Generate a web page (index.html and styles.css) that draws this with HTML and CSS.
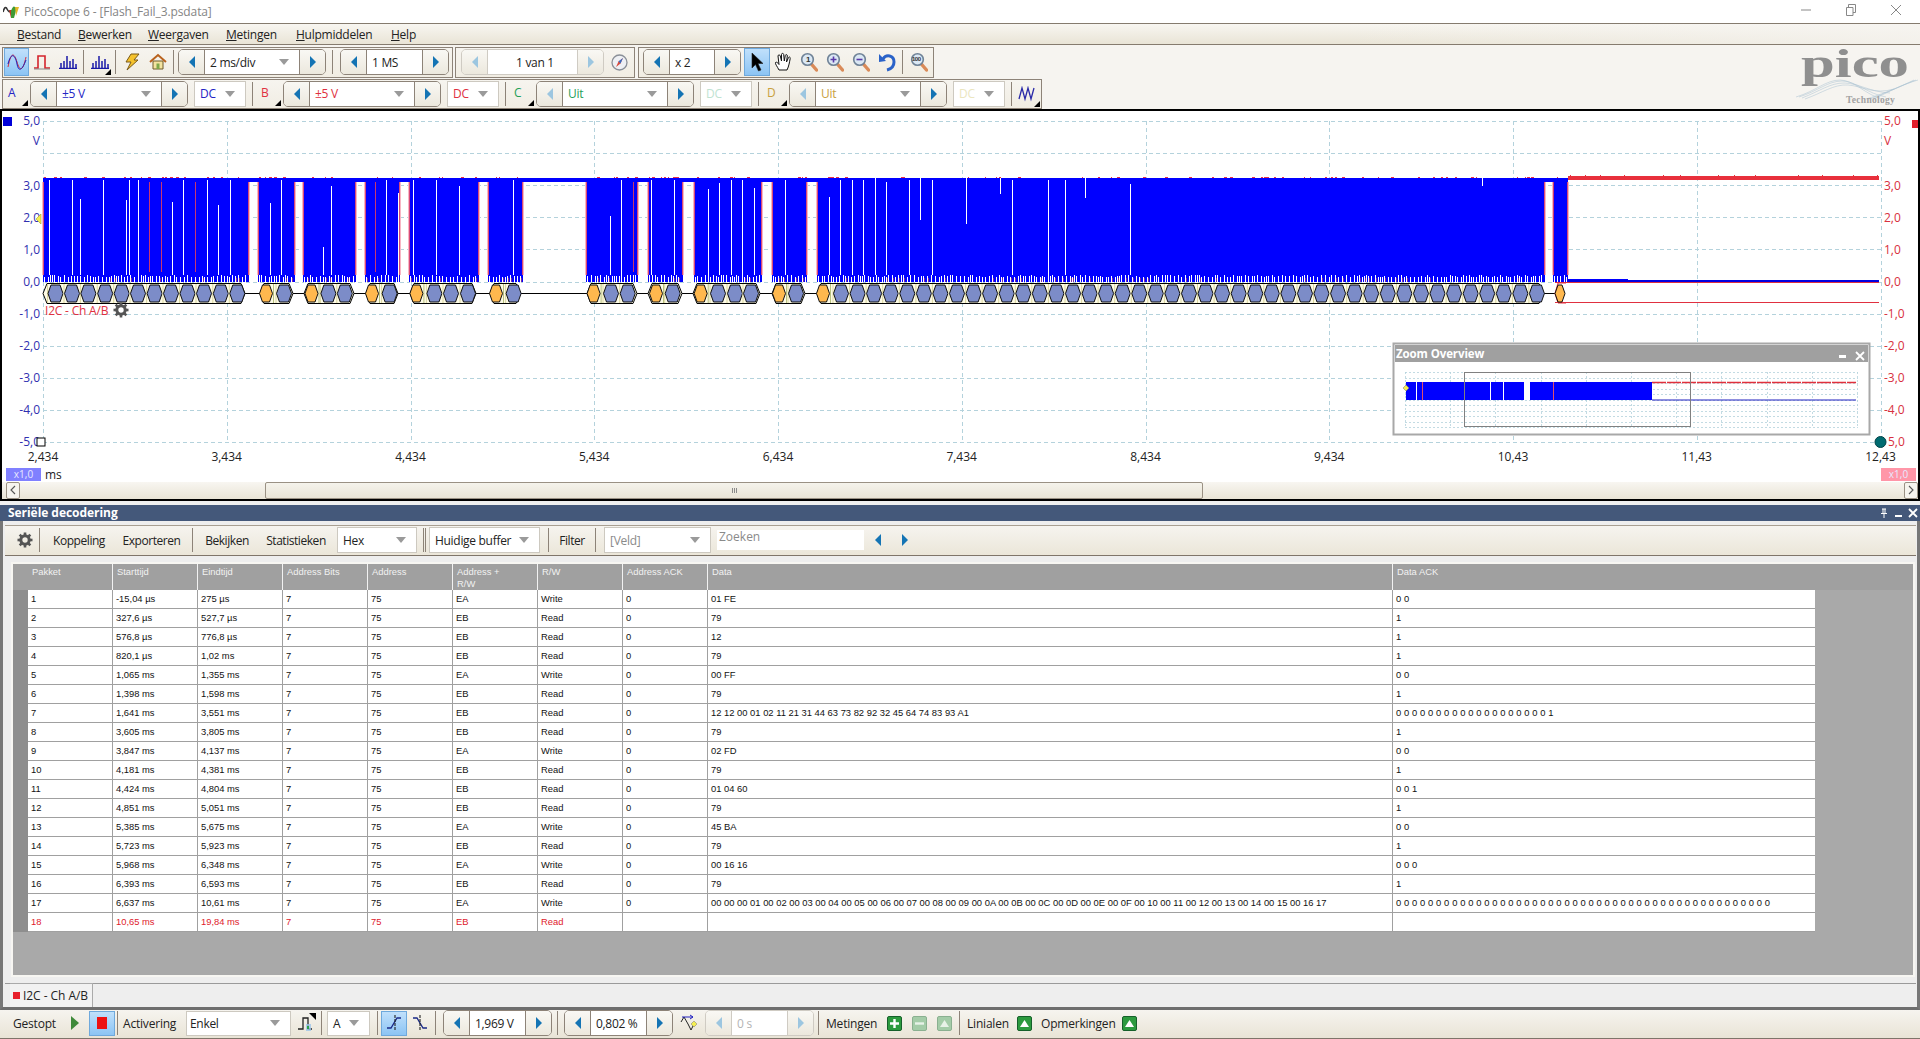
FILE: index.html
```html
<!DOCTYPE html>
<html lang="nl">
<head>
<meta charset="utf-8">
<title>PicoScope 6</title>
<link rel="stylesheet" href="styles.css">
</head>
<body>
<svg class="defs" width="0" height="0" aria-hidden="true">
  <defs>
    <symbol id="mag" viewBox="0 0 18 20"><line x1="10.5" y1="11" x2="16.5" y2="18" stroke="#d98a58" stroke-width="3.4" stroke-linecap="round"/><circle cx="7.5" cy="7.5" r="5.8" fill="#dbe8f4" stroke="#6f8296" stroke-width="1.6"/></symbol>
    <symbol id="gear" viewBox="0 0 16 16"><circle cx="8" cy="8" r="4.2" fill="none" stroke="#555" stroke-width="3"/><g stroke="#555" stroke-width="2.6"><line x1="8" y1="0.5" x2="8" y2="3.5"/><line x1="8" y1="12.5" x2="8" y2="15.5"/><line x1="0.5" y1="8" x2="3.5" y2="8"/><line x1="12.5" y1="8" x2="15.5" y2="8"/><line x1="2.7" y1="2.7" x2="4.8" y2="4.8"/><line x1="11.2" y1="11.2" x2="13.3" y2="13.3"/><line x1="2.7" y1="13.3" x2="4.8" y2="11.2"/><line x1="11.2" y1="4.8" x2="13.3" y2="2.7"/></g></symbol>
    <symbol id="gbtn-up" viewBox="0 0 15 15"><rect x="0.5" y="0.5" width="14" height="14" rx="1.5" fill="#2c9a3e" stroke="#16602a"/><path d="M3 11 L7.5 4 L12 11 Z" fill="#fff"/></symbol>
  </defs>
</svg>

<div class="app">
  <header class="titlebar">
    <svg class="app-icon" width="16" height="14" viewBox="0 0 16 14"><path d="M0 8 Q2 1 4 5 T8 7" fill="none" stroke="#333" stroke-width="1.6"/><path d="M6 6 L8 14 L10 6 Z" fill="#c03a2a"/><path d="M8 7 Q10 1 12 3 L14 3 L11 14 L8 14 Z" fill="#3f9a35"/><path d="M12 3 L16 3 L13 12 Z" fill="#e2b92a"/></svg>
    <span class="title-text">PicoScope 6 - [Flash_Fail_3.psdata]</span>
    <div class="win-btns">
      <svg width="12" height="12" viewBox="0 0 12 12"><line x1="1" y1="6" x2="11" y2="6" stroke="#888"/></svg>
      <svg width="12" height="12" viewBox="0 0 12 12"><path d="M3.5 3V.5H10.5V8.5H8M1.5 3.5H8V11.5H1.5Z" fill="none" stroke="#888"/></svg>
      <svg width="12" height="12" viewBox="0 0 12 12"><path d="M1 1L11 11M11 1L1 11" stroke="#888"/></svg>
    </div>
  </header>

  <nav class="menubar">
    <span class="menu m1"><u>B</u>estand</span>
    <span class="menu m2"><u>B</u>ewerken</span>
    <span class="menu m3"><u>W</u>eergaven</span>
    <span class="menu m4"><u>M</u>etingen</span>
    <span class="menu m5"><u>H</u>ulpmiddelen</span>
    <span class="menu m6"><u>H</u>elp</span>
  </nav>

  <section class="toolband">
    <div class="tb-row row-one">
      <div class="tb tb-a">
        <div class="ibtn active first">
          <svg width="20" height="16" viewBox="0 0 20 16"><path d="M1 13 C4 -2 7 -2 10 8 S16 17 19 3" fill="none" stroke="#d8303c"/><path d="M1 10 C4 -2 8 0 10 10 S16 14 19 6" fill="none" stroke="#2020b8"/></svg>
        </div>
        <div class="ibtn">
          <svg width="18" height="16" viewBox="0 0 18 16"><path d="M1 14H5V2H12V14H17" fill="none" stroke="#d4242c" stroke-width="1.6"/><line x1="1" y1="15" x2="17" y2="15" stroke="#888"/></svg>
        </div>
        <div class="ibtn">
          <svg width="18" height="14" viewBox="0 0 18 14" class="bars"><path d="M2 13V8M5 13V6M8 13V1M11 13V6M14 13V4M17 13V9M0 13.5H18" stroke="#1a1aa8" stroke-width="1.5"/></svg>
        </div>
        <span class="sep"></span>
        <div class="ibtn has-corner">
          <svg width="18" height="14" viewBox="0 0 18 14"><path d="M2 13V8M5 13V6M8 13V1M11 13V6M14 13V4M17 13V9M0 13.5H18" stroke="#1a1aa8" stroke-width="1.5"/></svg>
          <span class="corner"></span>
        </div>
        <span class="sep"></span>
        <div class="ibtn">
          <svg width="16" height="18" viewBox="0 0 16 18"><path d="M7 1H15L10 7H14L3 17L7 9H2Z" fill="#f5c22c" stroke="#7a5a18"/></svg>
        </div>
        <div class="ibtn">
          <svg width="18" height="18" viewBox="0 0 18 18"><path d="M4 16V8H14V16Z" fill="#f3e3a0" stroke="#6e5a2a"/><path d="M1 9L9 2L17 9" fill="none" stroke="#b9621e" stroke-width="2"/><rect x="7.5" y="10.5" width="3" height="5.5" fill="#7fa84a"/></svg>
        </div>
        <span class="sep sep-wide"></span>
        <div class="stepper w-timebase">
          <div class="step"><span class="arr-l"></span></div>
          <div class="field">2 ms/div<span class="caret"></span></div>
          <div class="step"><span class="arr-r"></span></div>
        </div>
        <span class="sep sep-big"></span>
        <div class="stepper w-short">
          <div class="step"><span class="arr-l"></span></div>
          <div class="field">1 MS</div>
          <div class="step"><span class="arr-r"></span></div>
        </div>
      </div>

      <div class="tb tb-b">
        <div class="stepper w-buffer off">
          <div class="step"><span class="arr-l"></span></div>
          <div class="field center">1 van 1</div>
          <div class="step"><span class="arr-r"></span></div>
        </div>
        <div class="ibtn wide-compass">
          <svg width="17" height="17" viewBox="0 0 17 17"><circle cx="8.5" cy="8.5" r="7.5" fill="#eef0f4" stroke="#8a8f98" stroke-width="1.3"/><path d="M12 4L9.5 9.5L5 13L7.5 7.5Z" fill="#d94a3c"/><path d="M12 4L7.5 7.5L9.5 9.5Z" fill="#3a6fc4"/></svg>
        </div>
      </div>

      <div class="tb tb-c">
        <div class="stepper w-zoomx">
          <div class="step"><span class="arr-l"></span></div>
          <div class="field">x 2</div>
          <div class="step"><span class="arr-r"></span></div>
        </div>
        <div class="ibtn active cursor-btn">
          <svg width="14" height="20" viewBox="0 0 14 20"><path d="M2 1V16L5.5 12.5L8.5 19L11 18L8 11.5H13Z" fill="#000" stroke="#222" stroke-width=".6"/></svg>
        </div>
        <div class="ibtn">
          <svg width="18" height="20" viewBox="0 0 18 20"><path d="M5 18C3 14 1 12 1.500 10.500C2.500 9.500 4 11 5 12.500L4 4C4 2.500 6 2.500 6.300 4L7.500 9L7.500 2.500C7.500 1 9.500 1 9.700 2.500L10.300 9L11.300 3.500C11.700 2 13.500 2.500 13.300 4L12.500 10L14.500 5.500C15 4.500 16.500 5 16.200 6.500C15.500 10 15 14 13 18Z" fill="#fff" stroke="#111"/></svg>
        </div>
        <div class="ibtn"><svg width="18" height="20"><use href="#mag"/></svg><span class="mag-mark">1</span></div>
        <div class="ibtn"><svg width="18" height="20" viewBox="0 0 18 20"><use href="#mag" width="18" height="20"/><path d="M4.500 7.500H10.500M7.500 4.500V10.500" stroke="#5a3aa8" stroke-width="1.600"/></svg></div>
        <div class="ibtn"><svg width="18" height="20" viewBox="0 0 18 20"><use href="#mag" width="18" height="20"/><path d="M4.500 7.500H10.500" stroke="#5a3aa8" stroke-width="1.600"/></svg></div>
        <div class="ibtn">
          <svg width="18" height="20" viewBox="0 0 18 20"><path d="M5 7C8 2 16 3 16 10C16 14 13 17 9 18" fill="none" stroke="#2a62c8" stroke-width="3"/><path d="M1 2L8 9L1 10Z" fill="#2a62c8"/></svg>
        </div>
        <span class="sep"></span>
        <div class="ibtn"><svg width="18" height="20"><use href="#mag"/></svg><span class="mag-mark small">100</span></div>
      </div>
    </div>

    <div class="tb-row row-two">
      <div class="tb tb-chan">
        <div class="chan first c-a">A<span class="corner"></span></div>
        <div class="stepper w-range c-a">
          <div class="step"><span class="arr-l"></span></div>
          <div class="field">±5 V<span class="caret"></span></div>
          <div class="step"><span class="arr-r"></span></div>
        </div>
        <div class="select w-dc c-a">DC<span class="caret"></span></div>
        <span class="sep sep-chan"></span>

        <div class="chan c-b">B<span class="corner"></span></div>
        <div class="stepper w-range c-b">
          <div class="step"><span class="arr-l"></span></div>
          <div class="field">±5 V<span class="caret"></span></div>
          <div class="step"><span class="arr-r"></span></div>
        </div>
        <div class="select w-dc c-b">DC<span class="caret"></span></div>
        <span class="sep sep-chan"></span>

        <div class="chan c-c">C<span class="corner"></span></div>
        <div class="stepper w-range c-c half">
          <div class="step"><span class="arr-l"></span></div>
          <div class="field">Uit<span class="caret"></span></div>
          <div class="step"><span class="arr-r"></span></div>
        </div>
        <div class="select w-dc c-c faint">DC<span class="caret"></span></div>
        <span class="sep sep-chan"></span>

        <div class="chan c-d">D<span class="corner"></span></div>
        <div class="stepper w-range c-d half">
          <div class="step"><span class="arr-l"></span></div>
          <div class="field">Uit<span class="caret"></span></div>
          <div class="step"><span class="arr-r"></span></div>
        </div>
        <div class="select w-dc c-d faint">DC<span class="caret"></span></div>
        <span class="sep sep-chan"></span>

        <div class="ibtn has-corner last-icon">
          <svg width="18" height="16" viewBox="0 0 18 16"><path d="M1 13L4 2L7 13L10 2L13 13L16 2" fill="none" stroke="#2a2aa8" stroke-width="1.3"/></svg>
          <span class="corner"></span>
        </div>
      </div>
    </div>

    <svg class="logo" width="124" height="60" viewBox="0 0 124 60">
      <text class="logo-word" x="5" y="28" textLength="108" lengthAdjust="spacingAndGlyphs">pico</text>
      <g fill="none" stroke="#a9c0d0" stroke-width=".5">
        <path d="M0 48C20 42 30 31 44 31S70 46 86 50"/>
        <path d="M3 48C22 42 32 32 46 32S72 45 90 48"/>
        <path d="M6 49C24 42 34 34 48 34S74 43 94 44"/>
        <path d="M9 50C26 44 38 35 52 36S78 46 98 40"/>
        <path d="M70 50C84 46 104 38 118 31"/>
        <path d="M74 50C88 45 106 36 120 31"/>
        <path d="M78 50C92 43 108 35 122 31"/>
      </g>
      <text class="logo-sub" x="50" y="54">Technology</text>
    </svg>
  </section>

  <section class="scope">
    <svg class="plot" width="1916" height="371" viewBox="2 111 1916 371">
      <rect x="3" y="117" width="9" height="9" fill="#0000d8"/>
      <rect x="1912" y="120" width="6" height="8" fill="#e0202c"/>
      <g id="grid"></g>
      <g class="lab-l">
        <text x="40" y="125">5,0</text><text x="40" y="145">V</text>
        <text x="40" y="190">3,0</text><text x="40" y="222">2,0</text><text x="40" y="254">1,0</text>
        <text x="40" y="286">0,0</text><text x="40" y="318">-1,0</text><text x="40" y="350">-2,0</text>
        <text x="40" y="382">-3,0</text><text x="40" y="414">-4,0</text><text x="40" y="446">-5,0</text>
      </g>
      <g class="lab-r">
        <text x="1884" y="125">5,0</text><text x="1884" y="145">V</text>
        <text x="1884" y="190">3,0</text><text x="1884" y="222">2,0</text><text x="1884" y="254">1,0</text>
        <text x="1884" y="286">0,0</text><text x="1884" y="318">-1,0</text><text x="1884" y="350">-2,0</text>
        <text x="1884" y="382">-3,0</text><text x="1884" y="414">-4,0</text><text x="1888" y="446">5,0</text>
      </g>
      <g class="lab-x">
        <text x="43" y="461">2,434</text><text x="226.700" y="461">3,434</text><text x="410.500" y="461">4,434</text>
        <text x="594.200" y="461">5,434</text><text x="778" y="461">6,434</text><text x="961.700" y="461">7,434</text>
        <text x="1145.500" y="461">8,434</text><text x="1329.200" y="461">9,434</text><text x="1513" y="461">10,43</text>
        <text x="1696.700" y="461">11,43</text><text x="1880.500" y="461">12,43</text>
      </g>
      <g id="trace"></g>
      <text class="decode-label" x="45" y="315">I2C - Ch A/B</text>
      <use href="#gear" x="113" y="302" width="16" height="16"/>
      <path d="M36 219L41 214V224Z" fill="#f4ee50" stroke="#a8a030" stroke-width=".6"/>
      <rect x="37" y="438" width="8" height="8" fill="#fff" stroke="#000"/>
      <circle cx="1880.500" cy="442" r="5.500" fill="#006b70" stroke="#004448"/>

      <rect x="6" y="468" width="35" height="13" fill="#8080ff"/>
      <text class="tag" x="23.500" y="478">x1,0</text>
      <text class="unit" x="45" y="479">ms</text>
      <rect x="1881" y="468" width="35" height="13" fill="#ff96a8"/>
      <text class="tag" x="1898.500" y="478">x1,0</text>

      <g class="overview">
        <rect x="1393.500" y="343.500" width="476" height="91" fill="#fff" stroke="#a8a8a8" stroke-width="2"/>
        <rect x="1395" y="345" width="473" height="17" fill="#a0a0a0"/>
        <text class="ov-title" x="1396" y="358">Zoom Overview</text>
        <rect x="1839" y="355" width="7" height="3" fill="#fff"/>
        <path d="M1856 352L1864 360M1864 352L1856 360" stroke="#fff" stroke-width="1.800"/>
        <g id="ov-grid"></g>
        <rect x="1406" y="382" width="246" height="18" fill="#0000ff"/>
        <rect x="1416" y="382" width="1" height="18" fill="#fff"/>
        <rect x="1422" y="382" width="1" height="18" fill="#e0506a"/>
        <rect x="1490" y="382" width="1" height="18" fill="#fff"/>
        <rect x="1503" y="382" width="1" height="18" fill="#fff"/>
        <rect x="1524" y="382" width="6" height="18" fill="#fff"/>
        <rect x="1553" y="382" width="1" height="18" fill="#e0506a"/>
        <line x1="1652" y1="382.500" x2="1856" y2="382.500" stroke="#e0303c" stroke-width="1.500" stroke-dasharray="14 1"/>
        <line x1="1652" y1="400" x2="1856" y2="400" stroke="#2020c0" stroke-width="1.200"/>
        <path d="M1406 385L1409 388L1406 391L1403 388Z" fill="#f4ee50" stroke="#777" stroke-width=".5"/>
        <rect x="1464.500" y="372.500" width="226" height="54" fill="none" stroke="#808080"/>
      </g>
    </svg>
    <div class="hscroll">
      <div class="sc-btn"><svg width="6" height="10" viewBox="0 0 6 10"><path d="M5 1L1 5L5 9" fill="none" stroke="#555" stroke-width="1.100"/></svg></div>
      <div class="sc-track">
        <div class="sc-thumb"><span class="grip"></span></div>
      </div>
      <div class="sc-btn"><svg width="6" height="10" viewBox="0 0 6 10"><path d="M1 1L5 5L1 9" fill="none" stroke="#555" stroke-width="1.100"/></svg></div>
    </div>
  </section>

  <section class="panel">
    <div class="panel-head">
      <span class="panel-title">Seriële decodering</span>
      <div class="panel-icons">
        <svg width="10" height="10" viewBox="0 0 10 10"><path d="M3 1H7M4 1V5M6 1V5M2 5.500H8M5 5.500V10" stroke="#fff"/></svg>
        <svg width="9" height="10" viewBox="0 0 9 10"><rect x="1" y="7" width="7" height="2" fill="#fff"/></svg>
        <svg width="10" height="10" viewBox="0 0 10 10"><path d="M1 1L9 9M9 1L1 9" stroke="#fff" stroke-width="1.800"/></svg>
      </div>
    </div>
    <div class="serial-tb">
      <div class="sb gear-btn"><svg width="16" height="16"><use href="#gear"/></svg></div>
      <span class="sep sep-s"></span>
      <div class="sb s-kop">Koppeling</div>
      <div class="sb s-exp">Exporteren</div>
      <span class="sep sep-serial"></span>
      <div class="sb s-bek">Bekijken</div>
      <div class="sb s-sta">Statistieken</div>
      <div class="select s-hex">Hex<span class="caret"></span></div>
      <span class="sep sep-d1"></span><span class="sep sep-d2"></span>
      <div class="select s-buf">Huidige buffer<span class="caret"></span></div>
      <span class="sep sep-filter"></span>
      <div class="sb s-fil">Filter</div>
      <span class="sep sep-s"></span>
      <div class="select s-veld">[Veld]<span class="caret"></span></div>
      <div class="searchbox">Zoeken</div>
      <div class="sb s-arr"><span class="arr-l"></span></div>
      <div class="sb s-arr"><span class="arr-r"></span></div>
    </div>
    <div class="tablewrap">
      <table class="packets">
        <colgroup>
          <col class="c-rowh"><col class="c-pk"><col class="c-std"><col class="c-std"><col class="c-std"><col class="c-std"><col class="c-std"><col class="c-std"><col class="c-std"><col class="c-data"><col class="c-ack">
        </colgroup>
        <thead>
          <tr><th class="rowh"></th><th>Pakket</th><th>Starttijd</th><th>Eindtijd</th><th>Address Bits</th><th>Address</th><th>Address +<br>R/W</th><th>R/W</th><th>Address ACK</th><th>Data</th><th>Data ACK</th></tr>
        </thead>
        <tbody>
          <tr><td class="rowh"></td><td>1</td><td>-15,04 µs</td><td>275 µs</td><td>7</td><td>75</td><td>EA</td><td>Write</td><td>0</td><td>01 FE</td><td>0 0</td></tr>
          <tr><td class="rowh"></td><td>2</td><td>327,6 µs</td><td>527,7 µs</td><td>7</td><td>75</td><td>EB</td><td>Read</td><td>0</td><td>79</td><td>1</td></tr>
          <tr><td class="rowh"></td><td>3</td><td>576,8 µs</td><td>776,8 µs</td><td>7</td><td>75</td><td>EB</td><td>Read</td><td>0</td><td>12</td><td>1</td></tr>
          <tr><td class="rowh"></td><td>4</td><td>820,1 µs</td><td>1,02 ms</td><td>7</td><td>75</td><td>EB</td><td>Read</td><td>0</td><td>79</td><td>1</td></tr>
          <tr><td class="rowh"></td><td>5</td><td>1,065 ms</td><td>1,355 ms</td><td>7</td><td>75</td><td>EA</td><td>Write</td><td>0</td><td>00 FF</td><td>0 0</td></tr>
          <tr><td class="rowh"></td><td>6</td><td>1,398 ms</td><td>1,598 ms</td><td>7</td><td>75</td><td>EB</td><td>Read</td><td>0</td><td>79</td><td>1</td></tr>
          <tr><td class="rowh"></td><td>7</td><td>1,641 ms</td><td>3,551 ms</td><td>7</td><td>75</td><td>EB</td><td>Read</td><td>0</td><td>12 12 00 01 02 11 21 31 44 63 73 82 92 32 45 64 74 83 93 A1</td><td>0 0 0 0 0 0 0 0 0 0 0 0 0 0 0 0 0 0 0 1</td></tr>
          <tr><td class="rowh"></td><td>8</td><td>3,605 ms</td><td>3,805 ms</td><td>7</td><td>75</td><td>EB</td><td>Read</td><td>0</td><td>79</td><td>1</td></tr>
          <tr><td class="rowh"></td><td>9</td><td>3,847 ms</td><td>4,137 ms</td><td>7</td><td>75</td><td>EA</td><td>Write</td><td>0</td><td>02 FD</td><td>0 0</td></tr>
          <tr><td class="rowh"></td><td>10</td><td>4,181 ms</td><td>4,381 ms</td><td>7</td><td>75</td><td>EB</td><td>Read</td><td>0</td><td>79</td><td>1</td></tr>
          <tr><td class="rowh"></td><td>11</td><td>4,424 ms</td><td>4,804 ms</td><td>7</td><td>75</td><td>EB</td><td>Read</td><td>0</td><td>01 04 60</td><td>0 0 1</td></tr>
          <tr><td class="rowh"></td><td>12</td><td>4,851 ms</td><td>5,051 ms</td><td>7</td><td>75</td><td>EB</td><td>Read</td><td>0</td><td>79</td><td>1</td></tr>
          <tr><td class="rowh"></td><td>13</td><td>5,385 ms</td><td>5,675 ms</td><td>7</td><td>75</td><td>EA</td><td>Write</td><td>0</td><td>45 BA</td><td>0 0</td></tr>
          <tr><td class="rowh"></td><td>14</td><td>5,723 ms</td><td>5,923 ms</td><td>7</td><td>75</td><td>EB</td><td>Read</td><td>0</td><td>79</td><td>1</td></tr>
          <tr><td class="rowh"></td><td>15</td><td>5,968 ms</td><td>6,348 ms</td><td>7</td><td>75</td><td>EA</td><td>Write</td><td>0</td><td>00 16 16</td><td>0 0 0</td></tr>
          <tr><td class="rowh"></td><td>16</td><td>6,393 ms</td><td>6,593 ms</td><td>7</td><td>75</td><td>EB</td><td>Read</td><td>0</td><td>79</td><td>1</td></tr>
          <tr><td class="rowh"></td><td>17</td><td>6,637 ms</td><td>10,61 ms</td><td>7</td><td>75</td><td>EA</td><td>Write</td><td>0</td><td>00 00 00 01 00 02 00 03 00 04 00 05 00 06 00 07 00 08 00 09 00 0A 00 0B 00 0C 00 0D 00 0E 00 0F 00 10 00 11 00 12 00 13 00 14 00 15 00 16 17</td><td>0 0 0 0 0 0 0 0 0 0 0 0 0 0 0 0 0 0 0 0 0 0 0 0 0 0 0 0 0 0 0 0 0 0 0 0 0 0 0 0 0 0 0 0 0 0 0</td></tr>
          <tr class="err"><td class="rowh"></td><td>18</td><td>10,65 ms</td><td>19,84 ms</td><td>7</td><td>75</td><td>EB</td><td>Read</td><td></td><td></td><td></td></tr>
        </tbody>
      </table>
    </div>
    <div class="tabstrip">
      <div class="tab"><span class="tab-dot"></span>I2C - Ch A/B</div>
    </div>
  </section>

  <footer class="statusbar">
    <span class="st st-gest">Gestopt</span>
    <div class="ibtn st-play"><svg width="8" height="14" viewBox="0 0 8 14"><path d="M0 0L8 7L0 14Z" fill="#3f8a3a"/></svg></div>
    <div class="ibtn active st-stop"><span class="stop-sq"></span></div>
    <span class="sep sep-a"></span>
    <span class="st st-act">Activering</span>
    <div class="select st-mode">Enkel<span class="caret"></span></div>
    <div class="ibtn has-corner st-trig">
      <svg width="18" height="16" viewBox="0 0 18 16"><path d="M1 14H6V3H11V14H15" fill="none" stroke="#222" stroke-width="1.300"/><rect x="9" y="9" width="5" height="7" fill="#9cc4ea" opacity=".8"/><rect x="10" y="11" width="2" height="3" fill="#28a048"/></svg>
      <span class="corner corner-top"></span>
    </div>
    <span class="sep sep-a"></span>
    <div class="select st-chan">A<span class="caret"></span></div>
    <span class="sep sep-b"></span>
    <div class="ibtn active">
      <svg width="16" height="18" viewBox="0 0 16 18"><path d="M1 14H5L11 4H15" fill="none" stroke="#1a2a88" stroke-width="1.300"/><path d="M9 1V17" stroke="#222" stroke-width="1.100" stroke-dasharray="3 1"/></svg>
    </div>
    <div class="ibtn">
      <svg width="16" height="18" viewBox="0 0 16 18"><path d="M1 4H5L11 14H15" fill="none" stroke="#1a2a88" stroke-width="1.300"/><path d="M8 1V17" stroke="#222" stroke-width="1.100" stroke-dasharray="3 1"/></svg>
    </div>
    <span class="sep sep-c"></span>
    <div class="stepper w-short">
      <div class="step"><span class="arr-l"></span></div>
      <div class="field">1,969 V</div>
      <div class="step"><span class="arr-r"></span></div>
    </div>
    <span class="sep sep-d"></span>
    <div class="stepper w-short">
      <div class="step"><span class="arr-l"></span></div>
      <div class="field">0,802 %</div>
      <div class="step"><span class="arr-r"></span></div>
    </div>
    <div class="ibtn st-pre">
      <svg width="18" height="18" viewBox="0 0 18 18"><path d="M1 8L4 3L8 10L11 16L14 10" fill="none" stroke="#222"/><path d="M2 3H13M10 1L13 3L10 5" fill="none" stroke="#2020c0"/><path d="M14 7L17 10L14 13L11 10Z" fill="#f4ee50" stroke="#777" stroke-width=".5"/></svg>
    </div>
    <div class="stepper w-short off dim">
      <div class="step"><span class="arr-l"></span></div>
      <div class="field">0 s</div>
      <div class="step"><span class="arr-r"></span></div>
    </div>
    <span class="sep sep-e"></span>
    <span class="st st-met">Metingen</span>
    <svg class="gb g-plus" width="15" height="15" viewBox="0 0 15 15"><rect x=".5" y=".5" width="14" height="14" rx="1.500" fill="#2c9a3e" stroke="#16602a"/><path d="M7.500 3V12M3 7.500H12" stroke="#fff" stroke-width="2.400"/></svg>
    <svg class="gb g-minus" width="15" height="15" viewBox="0 0 15 15"><rect x=".5" y=".5" width="14" height="14" rx="1.500" fill="#a4cca8" stroke="#8ab090"/><path d="M3 7.500H12" stroke="#e8f2e8" stroke-width="2.400"/></svg>
    <svg class="gb g-up" width="15" height="15" viewBox="0 0 15 15"><rect x=".5" y=".5" width="14" height="14" rx="1.500" fill="#a4cca8" stroke="#8ab090"/><path d="M3 11L7.500 4L12 11Z" fill="#e8f2e8"/></svg>
    <span class="sep sep-f"></span>
    <span class="st st-lin">Linialen</span>
    <svg class="gb" width="15" height="15"><use href="#gbtn-up"/></svg>
    <span class="st st-opm">Opmerkingen</span>
    <svg class="gb" width="15" height="15"><use href="#gbtn-up"/></svg>
  </footer>
</div>
<script src="chart.js"></script>
</body>
</html>
```
FILE: styles.css
```css
* { box-sizing: border-box; }
html, body { margin: 0; padding: 0; }
body { width: 1920px; height: 1039px; overflow: hidden; background: #f0f0f0; font: 12px "Open Sans", "Noto Sans", sans-serif; color: #222; }
.defs { position: absolute; }
.app { display: flex; flex-direction: column; width: 1920px; height: 1039px; }

/* title bar */
.titlebar { display: flex; align-items: center; height: 23px; background: #fff; padding-left: 3px; }
.app-icon { margin-top: -1px; }
.title-text { margin-left: 5px; color: #858585; font-size: 12px; letter-spacing: -.1px; }
.win-btns { display: flex; gap: 33px; margin-left: auto; margin-right: 18px; margin-top: -3px; }

/* menu */
.menubar { display: flex; align-items: center; height: 22px; padding-top: 1px; border-top: 1px solid #857b6e; border-bottom: 1px solid #857b6e; background: linear-gradient(90deg, rgba(246,244,240,0) 0, rgba(246,244,240,0) 70%, rgba(246,244,240,.8) 100%), linear-gradient(180deg, #f8f6f1, #e9e4d6); }
.menu { color: #222; font-size: 12px; letter-spacing: -.25px; }
.m1 { margin-left: 17px; width: 61px; }
.m2 { width: 70px; }
.m3 { width: 78px; }
.m4 { width: 70px; }
.m5 { width: 95px; }

/* tool band */
.toolband { position: relative; height: 64px; background: #f6f4f0; padding-top: 2px; }
.tb-row { display: flex; padding-left: 2px; }
.row-one { height: 31px; }
.row-two { height: 30px; margin-top: 1px; }
.tb { display: flex; align-items: center; height: 100%; border: 1px solid #8d8378; background: linear-gradient(180deg, #f6f4ef, #f1ede3); }
.tb-a { width: 451px; }
.tb-b { width: 180px; margin-left: 2px; padding-left: 5px; }
.tb-c { width: 296px; margin-left: 3px; padding-left: 4px; }
.tb-chan { width: 1040px; }
.sep { flex: none; width: 1px; height: 24px; margin: 0 3px 0 2px; background: #8d8378; }
.sep-wide { margin-right: 4px; }
.sep-big { margin: 0 7px 0 6px; }
.sep-chan { margin: 0 0 0 6px; }

.ibtn { position: relative; flex: none; display: flex; align-items: center; justify-content: center; width: 26px; height: 28px; }
.ibtn.first { width: 25px; margin-left: 1px; }
.ibtn.active { background: linear-gradient(180deg, #c0e0fb, #8cc4f4); border: 1px solid #6fa9dc; }
.cursor-btn { margin-left: 3px; }
.wide-compass { margin-left: 2px; }
.last-icon { width: 30px; }
.mag-mark { position: absolute; left: 10px; top: 7px; font: 700 8px "Liberation Sans", sans-serif; color: #333; }
.mag-mark.small { left: 6px; top: 8px; font-size: 6px; letter-spacing: -.5px; }
.corner { position: absolute; right: 2px; bottom: 1px; width: 0; height: 0; border-style: solid; border-width: 0 0 6px 6px; border-color: transparent transparent #000 transparent; }
.corner-top { top: 2px; bottom: auto; right: 3px; border-width: 0 7px 7px 0; border-color: transparent #000 transparent transparent; }

/* steppers */
.stepper { flex: none; display: flex; height: 26px; border: 1px solid #8d8378; border-radius: 5px; overflow: hidden; background: #f2efe8; }
.step { flex: none; display: flex; align-items: center; justify-content: center; width: 25px; background: linear-gradient(180deg, #f9f8f4, #ece8dd); }
.field { position: relative; flex: 1; display: flex; align-items: center; padding-left: 5px; background: #fff; border-left: 1px solid #8d8378; border-right: 1px solid #8d8378; font-size: 12px; letter-spacing: -.3px; color: #222; }
.field.center { justify-content: center; }
.w-timebase { width: 148px; }
.w-short { width: 109px; }
.w-buffer { width: 143px; }
.w-zoomx { width: 98px; }
.w-range { width: 158px; }
.arr-l, .arr-r { display: block; width: 0; height: 0; border-style: solid; }
.arr-l { border-width: 6px 6px 6px 0; border-color: transparent #1474b4 transparent transparent; }
.arr-r { border-width: 6px 0 6px 6px; border-color: transparent transparent transparent #1474b4; }
.caret { position: absolute; right: 10px; top: 50%; margin-top: -3px; width: 0; height: 0; border-style: solid; border-width: 6px 5px 0 5px; border-color: #9a9a9a transparent transparent transparent; }
.off { border-color: #cfcbc3; }
.off .field { border-color: #cfcbc3; }
.off .arr-l { border-right-color: #9cc6e0; }
.off .arr-r { border-left-color: #9cc6e0; }
.dim .field { color: #b4b4b4; }
.half .arr-l { border-right-color: #9cc6e0; }

.select { position: relative; flex: none; display: flex; align-items: center; height: 26px; padding-left: 5px; background: #fff; border: 1px solid #cdc9c0; font-size: 12px; letter-spacing: -.3px; }
.w-dc { width: 52px; margin-left: 6px; }

.chan { position: relative; flex: none; width: 30px; height: 26px; padding: 3px 0 0 8px; font-size: 12px; }
.chan.first { width: 27px; padding-left: 5px; }
.c-a, .c-a .field { color: #2525c5; }
.c-b, .c-b .field { color: #e03040; }
.c-c, .c-c .field { color: #1fa058; }
.c-d, .c-d .field { color: #c9a040; }
.select.faint.c-c { color: #bfe3d2; }
.select.faint.c-d { color: #ebe6bf; }

.logo { position: absolute; right: 0; top: 4px; overflow: visible; }
.logo-word { font: 700 40px "Liberation Serif", serif; fill: #8f8f8f; }
.logo-sub { font: 700 9.500px "Liberation Serif", serif; fill: #a2a2a2; letter-spacing: .3px; }

/* scope */
.scope { display: flex; flex-direction: column; height: 392px; background: #fff; border: 2px solid #000; }
.plot { display: block; flex: none; overflow: visible; }
.plot text { font-family: "Open Sans", "Noto Sans", sans-serif; font-size: 12px; }
.lab-l text { fill: #3030b0; text-anchor: end; }
.lab-r text { fill: #d83040; }
.lab-x text { fill: #222; text-anchor: middle; }
.plot .decode-label { fill: #e03040; letter-spacing: -.2px; }
.plot .tag { font-size: 10px; fill: #e8e8ff; text-anchor: middle; }
.plot .unit { fill: #222; }
.plot .ov-title { fill: #fff; font-weight: 700; font-size: 11.500px; letter-spacing: -.1px; }

.hscroll { display: flex; height: 17px; padding-left: 4px; background: linear-gradient(180deg, #f8f6f1, #e9e4d6); }
.sc-btn { flex: none; display: flex; align-items: center; justify-content: center; width: 14px; border: 1px solid #9a9184; border-radius: 2px; background: #f6f4ee; }
.sc-track { flex: 1; padding-left: 245px; }
.sc-thumb { display: flex; align-items: center; justify-content: center; width: 938px; height: 17px; border: 1px solid #9a9184; border-radius: 2px; background: linear-gradient(180deg, #f5f3ec, #e9e4d6); }
.grip { width: 5px; height: 5px; border-left: 1px solid #8a8a8a; border-right: 1px solid #8a8a8a; background: linear-gradient(90deg, transparent 40%, #8a8a8a 40%, #8a8a8a 60%, transparent 60%); }

/* serial panel */
.panel { display: flex; flex-direction: column; height: 506px; margin-top: 4px; background: #eeeeee; border-right: 3px solid #777; border-left: 3px solid #777; border-bottom: 3px solid #6e6e6e; }
.panel-head { display: flex; align-items: center; flex: none; height: 16px; margin: 0 -3px; padding: 0 2px 0 8px; background: #44587a; color: #fff; }
.panel-title { font-weight: 700; font-size: 12px; letter-spacing: -.05px; }
.panel-icons { display: flex; align-items: center; gap: 5px; margin-left: auto; }
.serial-tb { display: flex; align-items: center; flex: none; height: 31px; margin: 4px 1px 0 2px; background: linear-gradient(180deg, #f6f4ef, #ebe6d9); border-top: 1px solid #a89f92; border-bottom: 1px solid #7f756a; }
.sb { flex: none; display: flex; align-items: center; justify-content: center; height: 26px; font-size: 12px; letter-spacing: -.45px; }
.sep-s { margin: 0; }
.gear-btn { width: 34px; padding-left: 5px; }
.s-kop { width: 78px; }
.s-exp { width: 67px; }
.sep-serial { margin: 0 0 0 7px; }
.s-bek { width: 68px; }
.s-sta { width: 70px; }
.s-hex { width: 80px; margin-left: 6px; }
.sep-d1 { margin: 0 1px 0 6px; }
.sep-d2 { margin: 0 3px 0 0; }
.s-buf { width: 111px; }
.sep-filter { margin: 0 0 0 8px; }
.s-fil { width: 46px; }
.s-veld { width: 107px; color: #8a8a8a; margin-left: 8px; }
.searchbox { flex: none; width: 147px; height: 20px; margin-left: 6px; padding: 0 0 0 2px; background: #fff; color: #8a8a8a; line-height: 14px; }
.s-arr { width: 27px; }

.tablewrap { flex: none; height: 411px; margin: 8px 4px 0 10px; background: #a9a9a9; outline: 2px solid #f7f6f2; overflow: hidden; position: relative; }
.tablewrap::before { content: ""; position: absolute; left: 0; right: 0; top: 0; height: 26px; background: #a0a0a0; }
.packets { position: relative; table-layout: fixed; border-collapse: separate; border-spacing: 0; width: 1802px; font: 9.400px/12px "Liberation Sans", sans-serif; color: #111; }
.c-rowh { width: 15px; }
.c-pk { width: 85px; }
.c-std { width: 85px; }
.c-data { width: 685px; }
.c-ack { width: 422px; }
.packets th { height: 26px; padding: 2px 4px 0; vertical-align: top; text-align: left; font-weight: 400; color: #f2f2f2; background: #a0a0a0; border-right: 1px solid #f2f2f2; }
.packets th.rowh, .packets th:last-child { border-right: 0; }
.packets td { height: 19px; padding: 1px 2px 0 3px; background: #fff; border-right: 1px solid #a0a0a0; border-bottom: 1px solid #a0a0a0; white-space: nowrap; overflow: hidden; }
.packets td.rowh { background: #8e8e8e; border: 0; }
.packets td:last-child { border-right: 0; word-spacing: .2px; }
.err td { color: #e0202c; }

.tabstrip { flex: 1; display: flex; margin: 8px 1px 0 2px; border-top: 1px solid #9a9a9a; padding-left: 5px; }
.tab { display: flex; align-items: center; width: 83px; margin-top: -1px; background: #f2f2f2; border: 1px solid #aaa; border-bottom: 0; border-left: 0; font-size: 12px; letter-spacing: -.05px; padding-left: 3px; }
.tab-dot { width: 7px; height: 7px; margin-right: 3px; background: #e8202c; }

/* status bar */
.statusbar { display: flex; align-items: center; flex: 1; padding-bottom: 2px; background: linear-gradient(180deg, #f6f4ef, #e9e4d6); border-bottom: 1px solid #7f756a; }
.statusbar .ibtn { height: 25px; }
.st { flex: none; font-size: 12px; letter-spacing: -.2px; }
.st-gest { width: 55px; margin-left: 13px; }
.statusbar .st-play { width: 14px; }
.statusbar .st-stop { margin-left: 7px; }
.stop-sq { display: block; width: 10px; height: 12px; background: #ee1111; }
.sep-a { margin: 0 5px 0 2px; }
.sep-b { margin: 0 3px 0 7px; }
.sep-c { margin: 0 7px 0 2px; }
.sep-d { margin: 0 6px 0 5px; }
.sep-e { margin: 0 7px 0 4px; }
.sep-f { margin: 0 7px 0 7px; }
.st-act { width: 63px; }
.st-mode { width: 105px; height: 25px; padding-left: 3px; }
.st-trig { margin-left: 2px; }
.st-chan { width: 43px; height: 25px; }
.statusbar .st-pre { width: 32px; }
.st-met { width: 61px; }
.gb { flex: none; }
.g-minus { margin-left: 10px; }
.g-up { margin-left: 10px; }
.st-lin { width: 50px; }
.st-opm { width: 81px; margin-left: 9px; }
```
FILE: chart.js
```js
// Builds the repetitive parts of the oscilloscope plot: grid, waveform and the decoded-packet hexagons.
(function () {
  var seed = 12345;
  function rnd() { seed = (seed * 1103 + 12345) % 65536; return seed / 65536; }
  function rect(x, y, w, h, c) { return '<rect x="' + x + '" y="' + y + '" width="' + w + '" height="' + h + '" fill="' + c + '"/>'; }

  var g = '';
  var i, x, y;
  var GRID = '#b4d2dc';
  for (i = 0; i <= 10; i++) {
    x = 43.5 + Math.round(i * 183.75);
    g += '<line x1="' + x + '" y1="121" x2="' + x + '" y2="442" stroke="' + GRID + '" stroke-dasharray="4 3"/>';
  }
  for (i = 0; i <= 10; i++) {
    y = Math.round(121 + i * 32.1) + 0.5;
    g += '<line x1="43" y1="' + y + '" x2="1881" y2="' + y + '" stroke="' + GRID + '" stroke-dasharray="4 3"/>';
  }
  document.getElementById('grid').innerHTML = g;

  var og = '';
  for (i = 0; i <= 10; i++) {
    x = 1405.5 + Math.round(i * 45.2);
    og += '<line x1="' + x + '" y1="372" x2="' + x + '" y2="427" stroke="' + GRID + '" stroke-width=".8" stroke-dasharray="2 2"/>';
    y = 372.5 + Math.round(i * 5.5);
    og += '<line x1="1405" y1="' + y + '" x2="1858" y2="' + y + '" stroke="' + GRID + '" stroke-width=".8" stroke-dasharray="2 2"/>';
  }
  document.getElementById('ov-grid').innerHTML = og;

  var BLUE = '#0000ff', RED = '#e8304a';
  var blocks = [[43, 249], [258, 295], [303, 356], [365, 400], [409, 479], [488, 523], [586, 638], [648, 683], [694, 762], [772, 807], [817, 1545], [1553, 1568]];
  var s = '';

  // blue top rail over the whole burst, white-backed gaps below it
  s += rect(249, 178, 1319, 4, BLUE);

  blocks.forEach(function (b) {
    var w = b[1] - b[0];
    s += rect(b[0], 178, w, 97, BLUE);
    s += rect(b[0], 275, w, 7, BLUE);
    var t;
    for (t = b[0] + 1; t < b[1] - 1; t += 2 + Math.floor(rnd() * 3)) {
      s += rect(t, 275 + Math.floor(rnd() * 3), 1, 7, '#fff');
      if (rnd() < 0.16) { s += rect(t + 1, 278, 1, 4, '#7a2aa0'); }
      if (rnd() < 0.22) { s += rect(t, 177, 1 + Math.floor(rnd() * 3), 1, RED); }
    }
    s += rect(b[0], 182, 1, 93, '#d84a78');
    s += rect(b[1] - 1, 182, 1, 93, '#d84a78');
    s += rect(b[1], 182, 1, 93, '#f7b6c4');
    s += rect(b[0] - 1, 182, 1, 93, '#f7b6c4');
  });

  // white dropouts: [x, top of line]
  var whites = [[49, 180], [72, 180], [80, 199], [103, 180], [126, 200], [129, 180], [138, 180], [172, 202], [183, 180], [207, 180], [218, 205], [230, 180],
    [270, 203], [281, 180], [323, 247], [331, 186], [386, 180], [398, 193], [413, 180], [436, 180], [459, 186], [513, 180],
    [610, 216], [621, 180], [651, 180], [674, 180], [708, 189], [719, 183], [731, 180], [742, 180], [754, 188], [785, 180],
    [829, 197], [840, 180], [852, 180], [863, 180], [875, 200], [886, 182], [909, 180], [932, 180], [1012, 180], [1048, 180], [1065, 180], [1130, 184]];
  whites.forEach(function (w) { s += rect(w[0], w[1], 1, 275 - w[1], '#fff'); });
  // a few short notches from the top of the trace
  [[875, 22], [920, 42], [966, 46], [1482, 8], [1000, 16], [1085, 20]].forEach(function (w) { s += rect(w[0], 178, 1, w[1], '#fff'); });
  [149, 161, 195, 375, 633, 1553].forEach(function (x0) { s += rect(x0, 182, 1, 90, '#c83870'); });

  // idle level after the burst
  s += rect(1568, 176, 311, 4, '#e8303c');
  for (x = 1570; x < 1878; x += 14 + Math.floor(rnd() * 30)) { s += rect(x, 175, 1, 2, '#e8303c'); }
  s += rect(1568, 279, 60, 3, BLUE);
  s += rect(1568, 280, 311, 2.5, '#0000e0');
  s += rect(1555, 282, 324, 1, '#e03040');
  s += rect(1555, 302, 324, 1, '#e03040');

  // decode bus
  s += '<line x1="43" y1="293.5" x2="1555" y2="293.5" stroke="#000" stroke-width="1.2"/>';
  function hex(c, colour, hw) {
    var ins = hw - 3;
    return '<path d="M' + (c - hw) + ' 293.5L' + (c - ins) + ' 285H' + (c + ins) + 'L' + (c + hw) + ' 293.5L' + (c + ins) + ' 302H' + (c - ins) + 'Z" fill="' + colour + '" stroke="#111"/>';
  }
  var ORANGE = '#ffb84e', SLATE = '#7c8cc8';
  var groups = [
    { a: 43, b: 245, blue: [55.5, 72, 88.4, 105.2, 121.7, 138, 154.6, 171, 187.5, 204, 220.8, 237.3] },
    { a: 260, b: 293, or: 266, blue: [284] },
    { a: 304, b: 354, or: 311.5, blue: [328.4, 344.8] },
    { a: 366, b: 398, or: 372, blue: [389.6] },
    { a: 410, b: 476, or: 416.4, blue: [434.4, 451, 468] },
    { a: 490, b: 520, or: 496, blue: [513.6] },
    { a: 587, b: 637, or: 593.6, blue: [611, 627.7] },
    { a: 648, b: 682, or: 656, blue: [672.7] },
    { a: 693, b: 760, or: 700.7, blue: [718, 735, 751] },
    { a: 772, b: 805, or: 779, blue: [796] },
    { a: 817, b: 1543, or: 823, blue: [] }
  ];
  for (i = 0; i < 43; i++) { groups[10].blue.push(Math.round((841 + i * 16.57) * 10) / 10); }

  groups.forEach(function (gr) {
    s += '<path d="M' + gr.a + ' 293.5L' + (gr.a + 4) + ' 283.5H' + (gr.b - 4) + 'L' + gr.b + ' 293.5L' + (gr.b - 4) + ' 303.5H' + (gr.a + 4) + 'Z" fill="#fdfbe6" stroke="#000"/>';
    if (gr.or) {
      s += rect(gr.or + 7, 284, 1, 19, '#b8c080');
      s += hex(gr.or, ORANGE, 6.5);
    }
    gr.blue.forEach(function (c) {
      s += rect(c - 8.5, 284, 1, 19, '#dcd8a0');
      s += hex(c, SLATE, 7.5);
    });
  });
  // last, still open packet
  s += '<path d="M1555 293.5L1558 283H1566" fill="none" stroke="#e03040"/><path d="M1555 293.5L1558 303H1566" fill="none" stroke="#e03040"/>';
  s += hex(1560, ORANGE, 5);

  document.getElementById('trace').innerHTML = s;
})();
```
